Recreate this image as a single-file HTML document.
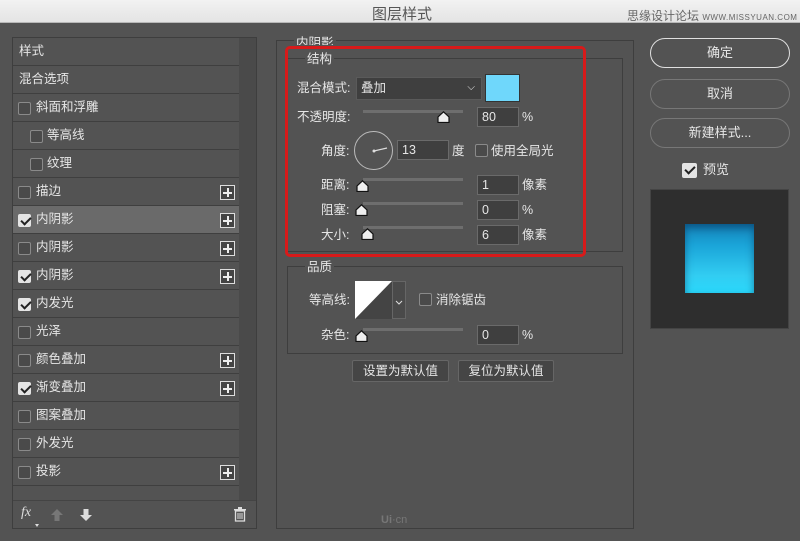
<!DOCTYPE html>
<html><head><meta charset="utf-8"><style>
*{margin:0;padding:0;box-sizing:border-box}
body{width:800px;height:541px;background:#535353;position:relative;overflow:hidden;font-family:"Liberation Sans","Noto Sans CJK SC",sans-serif;font-size:12px;color:#e6e6e6}
.a{position:absolute}
.title{left:0;top:0;width:800px;height:23px;background:linear-gradient(#f2f2f2,#e4e4e4);border-bottom:1px solid #b8b8b8}
.row{position:absolute;left:13px;width:226px;height:28px;border-bottom:1px solid #3f3f3f;line-height:27px;font-size:12.5px}
.cb{position:absolute;width:13px;height:13px;border:1px solid #8a8a8a;border-radius:2px;background:#4a4a4a}
.cb.on{background:#e4e4e4;border-color:#e4e4e4}
.cb.on::after{content:"";position:absolute;left:3.5px;top:0px;width:4px;height:8px;border:solid #222;border-width:0 2px 2px 0;transform:rotate(45deg)}
.plus{position:absolute;left:207px;top:7px;width:15px;height:15px;border:1px solid #ddd;background:#444}
.plus::before{content:"";position:absolute;left:6px;top:2px;width:1.5px;height:9px;background:#eee}
.plus::after{content:"";position:absolute;left:2px;top:6px;width:9px;height:1.5px;background:#eee}
.box{position:absolute;border:1px solid #3e3e3e}
.inp{position:absolute;height:20px;background:#3f3f3f;border:1px solid #6a6a6a;padding-left:4px;line-height:18px;font-size:12.5px}
.track{position:absolute;height:3px;background:#6e6e6e}
.thumb{position:absolute;width:13px;height:12px}
.btn{position:absolute;left:650px;width:140px;height:30px;border:1px solid #777;border-radius:15px;text-align:center;line-height:28px;font-size:13px}
.lbl{position:absolute;font-size:12.5px;line-height:14px;white-space:nowrap}
</style></head><body>
<div class="a title"></div>
<div class="a" style="left:372px;top:3px;font-size:15px;color:#555">图层样式</div>
<div class="a" style="left:627px;top:7px;font-size:12px;color:#666">思缘设计论坛 <span style="font-size:8px;letter-spacing:0.5px">WWW.MISSYUAN.COM</span></div>

<svg width="0" height="0" style="position:absolute"><defs><symbol id="th" viewBox="0 0 13 12"><path d="M1 11.5V6L6.5 0.8 12 6V11.5Z" fill="#eee" stroke="#111" stroke-width="1.2"/></symbol></defs></svg>

<!-- left panel -->
<div class="a" style="left:12px;top:37px;width:245px;height:492px;background:#4a4a4a;border:1px solid #3e3e3e"></div>
<div class="a" style="left:13px;top:38px;width:226px;height:462px;background:#535353"></div>
<div class="row" style="top:38px;padding-left:6px">样式</div>
<div class="row" style="top:66px;padding-left:6px">混合选项</div>
<div class="row" style="top:94px"><div class="cb" style="left:5px;top:8px"></div><span style="position:absolute;left:23px">斜面和浮雕</span></div>
<div class="row" style="top:122px"><div class="cb" style="left:17px;top:8px"></div><span style="position:absolute;left:34px">等高线</span></div>
<div class="row" style="top:150px"><div class="cb" style="left:17px;top:8px"></div><span style="position:absolute;left:34px">纹理</span></div>
<div class="row" style="top:178px"><div class="cb" style="left:5px;top:8px"></div><span style="position:absolute;left:23px">描边</span><div class="plus"></div></div>
<div class="row" style="top:206px;background:#6a6a6a"><div class="cb on" style="left:5px;top:8px"></div><span style="position:absolute;left:23px">内阴影</span><div class="plus"></div></div>
<div class="row" style="top:234px"><div class="cb" style="left:5px;top:8px"></div><span style="position:absolute;left:23px">内阴影</span><div class="plus"></div></div>
<div class="row" style="top:262px"><div class="cb on" style="left:5px;top:8px"></div><span style="position:absolute;left:23px">内阴影</span><div class="plus"></div></div>
<div class="row" style="top:290px"><div class="cb on" style="left:5px;top:8px"></div><span style="position:absolute;left:23px">内发光</span></div>
<div class="row" style="top:318px"><div class="cb" style="left:5px;top:8px"></div><span style="position:absolute;left:23px">光泽</span></div>
<div class="row" style="top:346px"><div class="cb" style="left:5px;top:8px"></div><span style="position:absolute;left:23px">颜色叠加</span><div class="plus"></div></div>
<div class="row" style="top:374px"><div class="cb on" style="left:5px;top:8px"></div><span style="position:absolute;left:23px">渐变叠加</span><div class="plus"></div></div>
<div class="row" style="top:402px"><div class="cb" style="left:5px;top:8px"></div><span style="position:absolute;left:23px">图案叠加</span></div>
<div class="row" style="top:430px"><div class="cb" style="left:5px;top:8px"></div><span style="position:absolute;left:23px">外发光</span></div>
<div class="row" style="top:458px"><div class="cb" style="left:5px;top:8px"></div><span style="position:absolute;left:23px">投影</span><div class="plus"></div></div>
<div class="a" style="left:13px;top:500px;width:243px;height:28px;background:#535353;border-top:1px solid #444"></div>
<div class="a" style="left:21px;top:505px;font-family:'Liberation Serif',serif;font-style:italic;font-size:14px;color:#ddd">fx</div>
<div class="a" style="left:35px;top:524px;width:0;height:0;border:2px solid transparent;border-top:3px solid #ddd"></div>
<svg class="a" style="left:50px;top:508px" width="14" height="14"><path d="M7 1 L13 7 L9.5 7 L9.5 13 L4.5 13 L4.5 7 L1 7Z" fill="#777"/></svg>
<svg class="a" style="left:79px;top:508px" width="14" height="14"><path d="M7 13 L13 7 L9.5 7 L9.5 1 L4.5 1 L4.5 7 L1 7Z" fill="#ddd"/></svg>
<svg class="a" style="left:233px;top:507px" width="14" height="15"><rect x="1" y="2" width="12" height="1.5" fill="#ddd"/><rect x="5" y="0" width="4" height="2" fill="#ddd"/><path d="M2.5 4 h9 v10 h-9z" fill="none" stroke="#ddd" stroke-width="1.3"/><path d="M5 6v6M7 6v6M9 6v6" stroke="#ddd"/></svg>

<!-- middle -->
<div class="box" style="left:276px;top:40px;width:358px;height:489px"></div>
<div class="lbl" style="left:294px;top:34px;background:#535353;padding:0 2px;height:11px;overflow:hidden;line-height:18px">内阴影</div>
<div class="box" style="left:287px;top:58px;width:336px;height:194px"></div>
<div class="lbl" style="left:305px;top:52px;background:#535353;padding:0 2px">结构</div>
<div class="lbl" style="left:297px;top:81px">混合模式:</div>
<div class="inp" style="left:356px;top:77px;width:126px;height:23px;line-height:21px;border-color:#5a5a5a">叠加<span style="position:absolute;right:6px;top:-1px;font-size:10px">⌵</span></div>
<div class="a" style="left:485px;top:74px;width:35px;height:28px;background:#6fd7fb;border:1px solid #333"></div>
<div class="lbl" style="left:297px;top:110px">不透明度:</div>
<div class="track" style="left:363px;top:110px;width:100px"></div>
<svg class="thumb" style="left:437px;top:111px"><use href="#th"/></svg>
<div class="inp" style="left:477px;top:107px;width:42px">80</div>
<div class="lbl" style="left:522px;top:110px">%</div>
<div class="lbl" style="left:321px;top:144px">角度:</div>
<div class="a" style="left:354px;top:131px;width:39px;height:39px;border:1px solid #bbb;border-radius:50%"></div>
<svg class="a" style="left:354px;top:131px" width="40" height="40"><line x1="20" y1="20" x2="33" y2="17" stroke="#ddd" stroke-width="1.2"/><circle cx="20" cy="20" r="1.5" fill="#ddd"/></svg>
<div class="inp" style="left:397px;top:140px;width:52px">13</div>
<div class="lbl" style="left:452px;top:144px">度</div>
<div class="cb" style="left:475px;top:144px"></div>
<div class="lbl" style="left:491px;top:144px">使用全局光</div>
<div class="lbl" style="left:321px;top:178px">距离:</div>
<div class="track" style="left:363px;top:178px;width:100px"></div>
<svg class="thumb" style="left:356px;top:180px"><use href="#th"/></svg>
<div class="inp" style="left:477px;top:175px;width:42px">1</div>
<div class="lbl" style="left:522px;top:178px">像素</div>
<div class="lbl" style="left:321px;top:203px">阻塞:</div>
<div class="track" style="left:363px;top:202px;width:100px"></div>
<svg class="thumb" style="left:355px;top:204px"><use href="#th"/></svg>
<div class="inp" style="left:477px;top:200px;width:42px">0</div>
<div class="lbl" style="left:522px;top:203px">%</div>
<div class="lbl" style="left:321px;top:228px">大小:</div>
<div class="track" style="left:363px;top:226px;width:100px"></div>
<svg class="thumb" style="left:361px;top:228px"><use href="#th"/></svg>
<div class="inp" style="left:477px;top:225px;width:42px">6</div>
<div class="lbl" style="left:522px;top:228px">像素</div>
<div class="a" style="left:285px;top:46px;width:301px;height:211px;border:3px solid #d81a1a;border-radius:5px"></div>

<div class="box" style="left:287px;top:266px;width:336px;height:88px"></div>
<div class="lbl" style="left:305px;top:260px;background:#535353;padding:0 2px">品质</div>
<div class="lbl" style="left:309px;top:293px">等高线:</div>
<svg class="a" style="left:355px;top:281px" width="51" height="39"><rect x="0" y="0" width="37" height="38" fill="#444"/><path d="M0 0H37L0 38Z" fill="#fff"/><rect x="37.5" y="0.5" width="13" height="37" fill="#4a4a4a" stroke="#666"/><path d="M41 20l3 3 3-3" fill="none" stroke="#ddd"/></svg>
<div class="cb" style="left:419px;top:293px"></div>
<div class="lbl" style="left:436px;top:293px">消除锯齿</div>
<div class="lbl" style="left:321px;top:328px">杂色:</div>
<div class="track" style="left:363px;top:328px;width:100px"></div>
<svg class="thumb" style="left:355px;top:330px"><use href="#th"/></svg>
<div class="inp" style="left:477px;top:325px;width:42px">0</div>
<div class="lbl" style="left:522px;top:328px">%</div>
<div class="a" style="left:352px;top:360px;width:97px;height:22px;background:#454545;border:1px solid #666;border-radius:2px;text-align:center;line-height:20px;font-size:12.5px">设置为默认值</div>
<div class="a" style="left:458px;top:360px;width:96px;height:22px;background:#454545;border:1px solid #666;border-radius:2px;text-align:center;line-height:20px;font-size:12.5px">复位为默认值</div>
<div class="a" style="left:381px;top:514px;font-size:11px;color:#777;font-weight:bold">Ui<span style="font-weight:normal">·cn</span></div>

<!-- right -->
<div class="btn" style="top:38px;border-color:#e0e0e0;border-width:1.5px">确定</div>
<div class="btn" style="top:79px">取消</div>
<div class="btn" style="top:118px">新建样式...</div>
<div class="cb on" style="left:682px;top:163px;width:15px;height:15px"></div>
<div class="lbl" style="left:703px;top:163px;font-size:13px">预览</div>
<div class="a" style="left:650px;top:189px;width:139px;height:140px;background:#2e2e2e;border:1px solid #444"></div>
<div class="a" style="left:685px;top:224px;width:69px;height:69px;background:linear-gradient(#1582b8 0%,#1aa4d8 30%,#32cdf2 75%,#2ad8fb 100%);box-shadow:inset 0 4px 8px rgba(0,40,80,.5)"></div>
</body></html>
